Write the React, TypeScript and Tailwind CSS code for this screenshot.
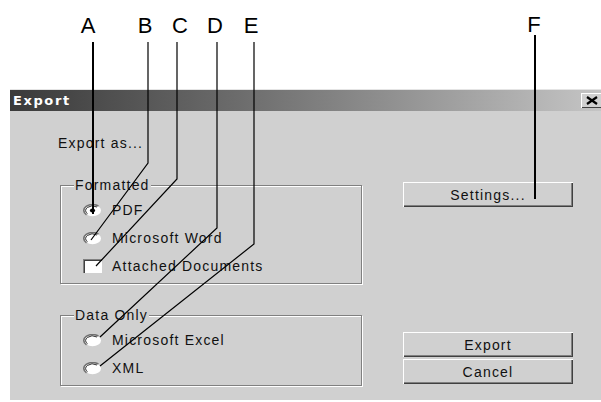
import React from "react";

const body = "font-['Liberation_Sans',Arial,sans-serif] text-[14px] leading-[16px] tracking-[1.2px] text-[#111]";

function Radio({ checked = false }: { checked?: boolean }) {
  return (
    <svg width="19" height="13" viewBox="0 0 19 13" className="shrink-0">
      <ellipse cx="9.5" cy="6.5" rx="8.5" ry="5.8" fill="#fff" />
      <path d="M15.5 2.2 A8.5 5.8 0 0 0 3.5 10.8" fill="none" stroke="#707070" strokeWidth="1.6" />
      <path d="M14 3 A7 4.6 0 0 0 4.6 9.8" fill="none" stroke="#303030" strokeWidth="1" />
      {checked && <ellipse cx="9.5" cy="6.5" rx="2.6" ry="2.1" fill="#000" />}
    </svg>
  );
}

function Option({ label, checked }: { label: string; checked?: boolean }) {
  return (
    <div className="flex items-center h-[28px]">
      <Radio checked={checked} />
      <span className="ml-[10px]">{label}</span>
    </div>
  );
}

function Group({ title, children, className }: { title: string; children: React.ReactNode; className: string }) {
  return (
    <fieldset
      className={`ml-[2px] w-[302px] border border-[#808080] shadow-[inset_1px_1px_0_#fff,1px_1px_0_#fff] ${className}`}
    >
      <legend className="ml-[13px] px-[1px] bg-[#d0d0d0]">{title}</legend>
      <div className="pl-[22px] pt-[3px] pb-[3px]">{children}</div>
    </fieldset>
  );
}

function Button({ label, className = "" }: { label: string; className?: string }) {
  return (
    <div
      className={`w-[170px] h-[25px] flex items-center justify-center bg-[#d0d0d0] shadow-[inset_1px_1px_0_#fff,inset_-1px_-1px_0_#404040,inset_-2px_-2px_0_#808080] ${className}`}
    >
      {label}
    </div>
  );
}

export default function App() {
  return (
    <div className="relative w-[601px] h-[402px] bg-white overflow-hidden">
      <div className={`ml-[10px] mt-[89px] w-[595px] border-t border-[#e4e4e4] ${body}`}>
        {/* title bar */}
        <div className="h-[21px] flex items-center justify-between bg-gradient-to-r from-[#3a3a3a] to-[#c6c6c6]">
          <span className="pl-[3px] font-['DejaVu_Sans',sans-serif] font-bold text-[13px] tracking-[1.6px] text-white">
            Export
          </span>
          <div className="mr-[2px] w-[22px] h-[15px] flex items-center justify-center bg-[#d0d0d0] shadow-[inset_1px_1px_0_#fff,inset_-1px_-1px_0_#404040]">
            <svg width="14" height="9" viewBox="0 0 14 9">
              <path d="M2 1 L12 8 M12 1 L2 8" stroke="#000" strokeWidth="2.2" />
            </svg>
          </div>
        </div>

        {/* body */}
        <div className="h-[289px] flex bg-[#d0d0d0]">
          <div className="w-[352px] pl-[48px] pt-[24px] flex flex-col">
            <p>Export as...</p>
            <Group title="Formatted" className="mt-[26px]">
              <Option label="PDF" checked />
              <Option label="Microsoft Word" />
              <div className="flex items-center h-[28px]">
                <div className="w-[19px] h-[14px] bg-white shrink-0 shadow-[inset_1px_1px_0_#808080,inset_2px_2px_0_#404040]" />
                <span className="ml-[10px]">Attached Documents</span>
              </div>
            </Group>
            <Group title="Data Only" className="mt-[23px]">
              <Option label="Microsoft Excel" />
              <Option label="XML" />
            </Group>
          </div>

          <div className="ml-[41px] pt-[71px] pb-[16px] flex flex-col">
            <Button label="Settings..." />
            <div className="mt-auto flex flex-col gap-[2px]">
              <Button label="Export" />
              <Button label="Cancel" />
            </div>
          </div>
        </div>
      </div>

      {/* callout labels and leader lines */}
      <svg className="absolute inset-0 pointer-events-none" width="601" height="402" viewBox="0 0 601 402">
        <g fontFamily="Liberation Sans, Arial, sans-serif" fontSize="22" fill="#000" textAnchor="middle">
          <text x="88" y="33">A</text>
          <text x="145" y="33">B</text>
          <text x="180" y="33">C</text>
          <text x="215" y="33">D</text>
          <text x="251" y="33">E</text>
          <text x="534" y="32">F</text>
        </g>
        <g fill="none" stroke="#000">
          <path d="M93 42 V214" strokeWidth="2" />
          <path d="M148 42 V163 L91 240" strokeWidth="1.2" />
          <path d="M177 42 V179 L96 266" strokeWidth="1.2" />
          <path d="M217 42 V228 L100 337" strokeWidth="1.2" />
          <path d="M254 42 V244 L100 366" strokeWidth="1.2" />
          <path d="M535 35 V199" strokeWidth="2" />
        </g>
      </svg>
    </div>
  );
}
